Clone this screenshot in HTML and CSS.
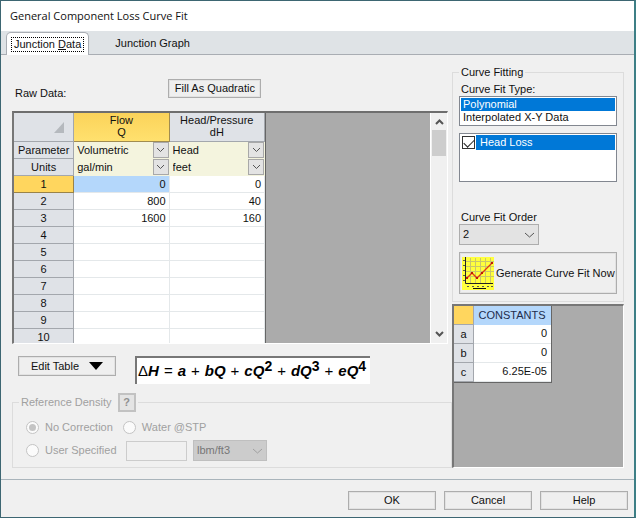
FILE: index.html
```html
<!DOCTYPE html>
<html lang="en">
<head>
  <meta charset="UTF-8">
  <meta name="viewport" content="width=device-width, initial-scale=1.0">
  <title>General Component Loss Curve Fit</title>
  <link rel="stylesheet" href="styles.css">
</head>
<body>
  <header class="titlebar">General Component Loss Curve Fit</header>

  <nav class="tabs" role="tablist">
    <button type="button" class="tab active" role="tab" aria-selected="true"><span>Junction <u>D</u>ata</span></button>
    <button type="button" class="tab" role="tab" aria-selected="false"><span>Junction Graph</span></button>
  </nav>

  <main class="content">
    <section class="left">
      <div class="raw-row">
        <span class="raw-label">Raw Data:</span>
        <button type="button" class="btn fill-btn">Fill As Quadratic</button>
      </div>

      <div class="grid-box">
        <div class="grid-view">
          <table class="grid">
            <thead>
              <tr class="head">
                <th class="corner"><svg width="10" height="11" viewBox="0 0 10 11"><path d="M10 0V11H0Z" fill="#b5b9be"/></svg></th>
                <th class="current">Flow<br>Q</th>
                <th>Head/Pressure<br>dH</th>
              </tr>
            </thead>
            <tbody>
              <tr class="option">
                <th>Parameter</th>
                <td>
                  <div class="cell-select">
                    <select aria-label="Flow parameter"><option>Volumetric</option></select>
                    <span class="arrow"><svg width="9" height="6" viewBox="0 0 9 6"><path d="M1 1L4.500 4.500L8 1"/></svg></span>
                  </div>
                </td>
                <td>
                  <div class="cell-select">
                    <select aria-label="Head parameter"><option>Head</option></select>
                    <span class="arrow"><svg width="9" height="6" viewBox="0 0 9 6"><path d="M1 1L4.500 4.500L8 1"/></svg></span>
                  </div>
                </td>
              </tr>
              <tr class="option">
                <th>Units</th>
                <td>
                  <div class="cell-select">
                    <select aria-label="Flow units"><option>gal/min</option></select>
                    <span class="arrow"><svg width="9" height="6" viewBox="0 0 9 6"><path d="M1 1L4.500 4.500L8 1"/></svg></span>
                  </div>
                </td>
                <td>
                  <div class="cell-select">
                    <select aria-label="Head units"><option>feet</option></select>
                    <span class="arrow"><svg width="9" height="6" viewBox="0 0 9 6"><path d="M1 1L4.500 4.500L8 1"/></svg></span>
                  </div>
                </td>
              </tr>
              <tr><th class="current">1</th><td class="selected">0</td><td>0</td></tr>
              <tr><th>2</th><td>800</td><td>40</td></tr>
              <tr><th>3</th><td>1600</td><td>160</td></tr>
              <tr><th>4</th><td></td><td></td></tr>
              <tr><th>5</th><td></td><td></td></tr>
              <tr><th>6</th><td></td><td></td></tr>
              <tr><th>7</th><td></td><td></td></tr>
              <tr><th>8</th><td></td><td></td></tr>
              <tr><th>9</th><td></td><td></td></tr>
              <tr><th>10</th><td></td><td></td></tr>
            </tbody>
          </table>
        </div>
        <div class="scrollbar">
          <svg width="9" height="6" viewBox="0 0 9 6"><path d="M1 5L4.500 1.500L8 5"/></svg>
          <div class="thumb"></div>
          <svg width="9" height="6" viewBox="0 0 9 6"><path d="M1 1L4.500 4.500L8 1"/></svg>
        </div>
      </div>

      <div class="edit-row">
        <button type="button" class="btn edit-btn">Edit Table <svg width="14" height="8" viewBox="0 0 14 8"><path d="M0 0H14L7 8Z"/></svg></button>
        <div class="formula"><span class="delta">Δ</span>H<span class="op">=</span>a<span class="op">+</span>bQ<span class="op">+</span>cQ<sup>2</sup><span class="op">+</span>dQ<sup>3</sup><span class="op">+</span>eQ<sup>4</sup></div>
      </div>

      <fieldset class="group density">
        <legend>Reference Density <button type="button" class="help-btn">?</button></legend>
        <div class="density-row">
          <label><input type="radio" name="density" checked disabled>No Correction</label>
          <label><input type="radio" name="density" disabled>Water @STP</label>
        </div>
        <div class="density-row">
          <label class="user"><input type="radio" name="density" disabled>User Specified</label>
          <input type="text" class="density-value" aria-label="Density" disabled>
          <div class="dropdown units">
            <select aria-label="Density units" disabled><option>lbm/ft3</option></select>
            <svg width="11" height="6" viewBox="0 0 11 6"><path d="M1 1L5.500 5L10 1"/></svg>
          </div>
        </div>
      </fieldset>
    </section>

    <section class="right">
      <fieldset class="group fitting">
        <legend>Curve Fitting</legend>
        <label for="fitType">Curve Fit Type:</label>
        <select id="fitType" class="listbox" size="2">
          <option selected>Polynomial</option>
          <option>Interpolated X-Y Data</option>
        </select>
        <div class="checklist">
          <label><input type="checkbox" checked><span>Head Loss</span></label>
        </div>
        <label for="fitOrder">Curve Fit Order</label>
        <div class="dropdown order">
          <select id="fitOrder"><option>2</option></select>
          <svg width="11" height="6" viewBox="0 0 11 6"><path d="M1 1L5.500 5L10 1"/></svg>
        </div>
        <button type="button" class="btn generate">
          <svg width="32" height="33" viewBox="0 0 32 33">
            <rect width="32" height="33" fill="#ffff3c"/>
            <path d="M8.500 1V26M13.500 1V26M18.500 1V26M23.500 1V26M28.500 1V26M4 4.500H32M4 9.500H32M4 14.500H32M4 19.500H32" fill="none" stroke="#c9c66a"/>
            <path d="M3.500 0V26.500H31" fill="none" stroke="#222"/>
            <path d="M1 3.500H3M1 8.500H3M1 13.500H3M1 18.500H3M1 23.500H3M5 29.500H7M10 29.500H12M15 29.500H17M20 29.500H22M25 29.500H27M29 29.500H31" stroke="#555"/>
            <path d="M5 21L10 16L15 21L20 16L30 6" fill="none" stroke="#e03a10" stroke-width="1.300"/>
            <path d="M9 15h2v2h-2zM14 20h2v2h-2zM19 15h2v2h-2zM29 5h2v2h-2zM4 20h2v2h-2z" fill="#c01808"/>
            <path d="M11 31.500H24" stroke="#111"/>
          </svg>
          Generate Curve Fit Now
        </button>
      </fieldset>

      <div class="constants-box">
        <table class="constants">
          <thead>
            <tr><th class="corner"></th><th class="name">CONSTANTS</th></tr>
          </thead>
          <tbody>
            <tr><th>a</th><td>0</td></tr>
            <tr><th>b</th><td>0</td></tr>
            <tr><th>c</th><td>6.25E-05</td></tr>
          </tbody>
        </table>
      </div>
    </section>
  </main>

  <footer class="buttons">
    <button type="button" class="btn">OK</button>
    <button type="button" class="btn">Cancel</button>
    <button type="button" class="btn">Help</button>
  </footer>
</body>
</html>
```

FILE: styles.css
```css
* {
  box-sizing: border-box;
}
body {
  display: flex;
  flex-direction: column;
  min-height: 100vh;
  margin: 0;
  border: 1px solid #3d6672;
  border-right: 2px solid #3d7f86;
  background: #f0f0f0;
  color: #111;
  font-family: "Liberation Sans", Arial, sans-serif;
  font-size: 11px;
  line-height: 13px;
}
button, select, input {
  margin: 0;
  font: inherit;
  color: inherit;
}
svg {
  flex: none;
}
.titlebar {
  padding: 6px 9px;
  background: #fff;
  font-family: "Open Sans", "Noto Sans", sans-serif;
  font-size: 11px;
  line-height: 18px;
}

/* tabs */
.tabs {
  display: flex;
  align-items: flex-end;
  gap: 18px;
  height: 24px;
  padding-left: 5px;
  border-bottom: 1px solid #a9adb3;
  background: #dfe3e6;
}
.tab {
  height: 22px;
  padding: 0 4px;
  border: 1px solid transparent;
  border-bottom: none;
  border-radius: 5px 5px 0 0;
  background: none;
}
.tab span {
  display: block;
  padding: 0 2px;
  border: 1px dotted transparent;
}
.tab.active {
  height: 23px;
  margin-bottom: -1px;
  border-color: #a9adb3;
  background: #fff;
}
.tab.active span {
  border-color: #000;
}

.content {
  display: flex;
  flex: 1;
  gap: 4px;
  padding: 10px 10px 11px 11px;
  border-bottom: 1px solid #a9b4bb;
}
.left {
  display: flex;
  flex: 1;
  flex-direction: column;
  padding-top: 14px;
}
.right {
  display: flex;
  flex-direction: column;
  width: 172px;
}
.btn {
  border: 1px solid #adadad;
  background: #efefef;
  box-shadow: inset 0 0 0 1px #e2e2e2;
}
.raw-row {
  display: flex;
  gap: 102px;
  margin-bottom: 11px;
  padding-left: 3px;
}
.raw-label {
  padding-top: 8px;
}
.fill-btn {
  width: 93px;
  height: 19px;
  padding: 0;
}

/* raw data grid */
.grid-box {
  display: flex;
  height: 233px;
  border: 1px solid #fff;
  border-top: 2px solid #6e6e6e;
  border-left: 2px solid #777;
}
.grid-view {
  flex: 1;
  overflow: hidden;
  background: #ababab;
}
.grid, .constants {
  border-collapse: separate;
  border-spacing: 0;
  table-layout: fixed;
  background: #fff;
}
.grid {
  width: 252px;
  border-right: 1px solid #666;
}
.grid th, .grid td {
  height: 17px;
  padding: 0 3px;
  border-right: 1px solid #e4e8ea;
  border-bottom: 1px solid #e4e8ea;
  line-height: 16px;
}
.grid th {
  border-color: #a3a7ad;
  background: #dfe2e7;
  font-weight: normal;
  text-align: center;
}
.grid td {
  text-align: right;
}
.grid .head th {
  width: 95px;
  height: 29px;
  padding: 0 3px 3px;
  line-height: 12px;
}
.grid .head .corner {
  width: 60px;
  padding: 3px 9px 0 0;
  text-align: right;
}
.grid .head .current {
  border-color: #a08c50;
  background: linear-gradient(#fbd35a, #ffe16e);
}
.grid th.current {
  border-color: #9a8348;
  background: #ffd65e;
}
.grid td.selected {
  background: #b4d7fb;
}
.grid .option td {
  padding: 0;
  border-color: #f4f4de;
  background: #f4f4de;
  text-align: left;
}
.cell-select, .dropdown {
  display: grid;
  align-items: center;
}
.cell-select > *, .dropdown > * {
  grid-area: 1 / 1;
}
.cell-select select {
  width: 100%;
  height: 16px;
  padding: 0 18px 0 3px;
  border: none;
  background: none;
  appearance: none;
}
.arrow {
  display: flex;
  align-items: center;
  justify-content: center;
  justify-self: end;
  width: 16px;
  height: 16px;
  border: 1px solid #a8a8a8;
  background: #e3e3e3;
  pointer-events: none;
}
.arrow path, .dropdown path, .scrollbar path {
  fill: none;
  stroke: #555;
}
.scrollbar {
  display: flex;
  flex-direction: column;
  align-items: center;
  width: 17px;
  padding: 6px 1px;
  border-left: 1px solid #fff;
  background: #f0f0f0;
}
.scrollbar path {
  stroke-width: 2;
}
.thumb {
  width: 100%;
  height: 26px;
  margin: 5px 0 auto;
  background: #cdcdcd;
}

/* edit button and formula */
.edit-row {
  display: flex;
  align-items: flex-start;
  gap: 19px;
  margin: 12px 0 9px;
  padding-left: 6px;
}
.edit-btn {
  display: flex;
  align-items: center;
  justify-content: center;
  gap: 10px;
  width: 98px;
  height: 20px;
  padding: 0;
}
.formula {
  height: 28px;
  padding: 0 4px 0 1px;
  border-top: 2px solid #777;
  border-left: 2px solid #777;
  background: #fff;
  color: #000;
  font-size: 15px;
  font-style: italic;
  font-weight: bold;
  line-height: 26px;
  white-space: nowrap;
}
.formula sup {
  font-size: 14px;
  font-style: normal;
  line-height: 0;
  vertical-align: 5px;
}
.delta, .op {
  font-style: normal;
  font-weight: normal;
}
.op {
  padding: 0 5px;
}

/* group boxes */
.group {
  min-width: 0;
  margin: 0;
  border: 1px solid #dcdcdc;
}
.group legend {
  padding: 0 2px;
}
.density {
  margin-right: -4px;
  padding: 4px 13px 5px;
  color: #a0a0a0;
}
.density legend {
  margin-left: -7px;
}
.help-btn {
  width: 18px;
  height: 19px;
  margin-left: 3px;
  padding: 0;
  border: 2px solid #c2c2c2;
  background: #e4e4e4;
  color: #909090;
  font-weight: bold;
}
.density-row {
  display: flex;
  align-items: center;
  gap: 10px;
  height: 23px;
}
.density-row label {
  display: flex;
  align-items: center;
  gap: 6px;
}
.density-row .user {
  width: 90px;
  white-space: nowrap;
}
.density-row input[type="radio"] {
  display: grid;
  flex: none;
  place-content: center;
  width: 13px;
  height: 13px;
  border: 1px solid #c4c4c4;
  border-radius: 50%;
  background: #fbfbfb;
  appearance: none;
}
.density-row input[type="radio"]:checked::before {
  content: "";
  width: 7px;
  height: 7px;
  border-radius: 50%;
  background: #c4c4c4;
}
.density-value {
  width: 61px;
  height: 20px;
  border: 1px solid #ccc;
  background: #f0f0f0;
}
.dropdown select {
  width: 100%;
  height: 21px;
  padding: 0 3px;
  border: 1px solid #adadad;
  border-radius: 0;
  background: #e3e3e3;
  appearance: none;
}
.dropdown svg {
  justify-self: end;
  margin-right: 4px;
  pointer-events: none;
}
.units {
  width: 74px;
  margin-left: -4px;
}
.units select {
  border-color: #bfbfbf;
  background: #ccc;
  color: #777;
  opacity: 1;
}
.units path {
  stroke: #a0a0a0;
}

/* curve fitting */
.fitting {
  display: flex;
  flex-direction: column;
  margin-bottom: 2px;
  padding: 4px 6px 7px;
}
.fitting legend {
  line-height: 14px;
}
.fitting > label {
  margin: 0 2px;
}
.listbox {
  height: 30px;
  padding: 1px;
  border: 1px solid #828790;
  border-radius: 0;
  background: #fff;
  overflow: hidden;
}
.listbox option {
  min-height: 13px;
  padding: 0 2px;
  line-height: 13px;
}
.listbox option:checked {
  background: #0078d7 linear-gradient(#0078d7, #0078d7);
  -webkit-text-fill-color: #fff;
}
.checklist {
  height: 49px;
  margin: 7px 0 29px;
  padding: 1px;
  border: 1px solid #828790;
  background: #fff;
}
.checklist label {
  display: flex;
  align-items: center;
  gap: 1px;
}
.checklist input {
  display: grid;
  place-content: center;
  width: 13px;
  height: 13px;
  margin-left: 1px;
  border: 1px solid #333;
  appearance: none;
}
.checklist input:checked::before {
  content: "";
  width: 9px;
  height: 5px;
  border: solid #222;
  border-width: 0 0 1px 1px;
  transform: translateY(-1px) rotate(-45deg);
}
.checklist span {
  flex: 1;
  padding: 1px 4px;
  background: #0078d7;
  color: #fff;
}
.order {
  width: 80px;
  margin-bottom: 7px;
}
.generate {
  display: flex;
  align-items: center;
  gap: 2px;
  height: 42px;
  padding: 0 2px;
  white-space: nowrap;
}

/* constants */
.constants-box {
  flex: 1;
  border: 1px solid #fff;
  border-top: 2px solid #777;
  border-left: 2px solid #777;
  background: #ababab;
}
.constants {
  width: 98px;
  border-right: 1px solid #666;
  border-bottom: 1px solid #666;
}
.constants th, .constants td {
  height: 19px;
  padding: 0 4px 2px;
  border-bottom: 1px solid #e4e8ea;
  text-align: right;
}
.constants th {
  width: 20px;
  padding-bottom: 0;
  border-right: 1px solid #a3a7ad;
  border-bottom-color: #a3a7ad;
  background: #dfe2e7;
  font-weight: normal;
  text-align: center;
}
.constants .corner {
  background: #ffd65e;
}
.constants .name {
  width: auto;
  padding: 0;
  border-color: #b4d7fb;
  background: #b4d7fb;
  color: #1d2c4c;
}

.buttons {
  display: flex;
  justify-content: flex-end;
  gap: 8px;
  padding: 11px 6px 7px;
}
.buttons .btn {
  width: 88px;
  height: 19px;
  padding: 0;
}
```
